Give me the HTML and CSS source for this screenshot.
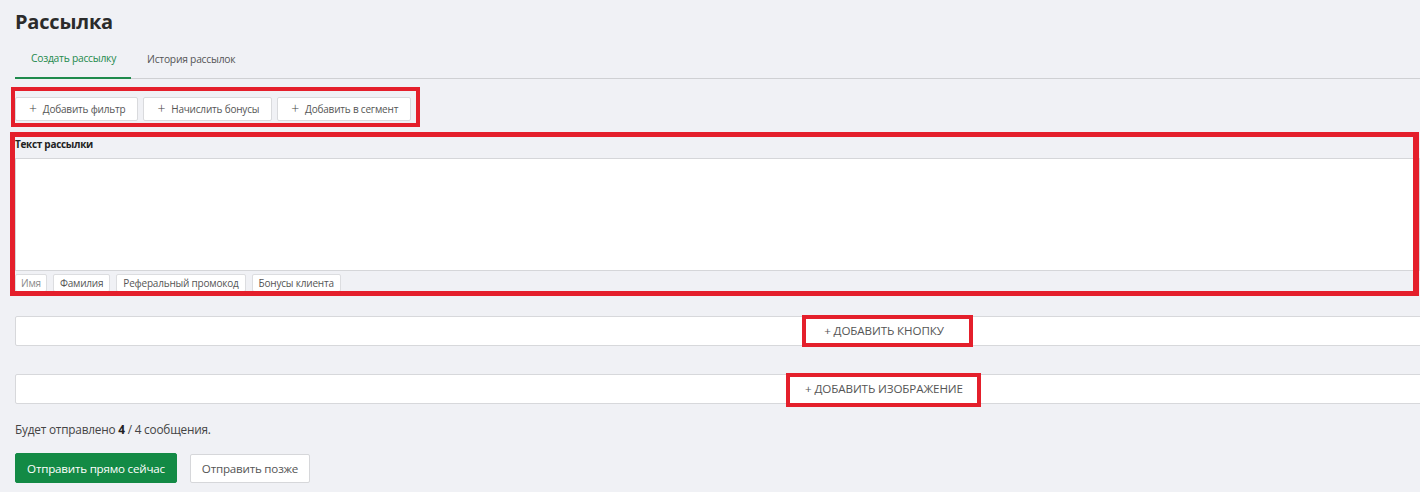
FILE: index.html
```html
<!DOCTYPE html>
<html lang="ru">
<head>
<meta charset="utf-8">
<title>Рассылка</title>
<link rel="stylesheet" href="styles.css">
</head>
<body>
<div class="page">
  <h1 class="title">Рассылка</h1>

  <nav class="tabs">
    <a class="tab tab-active">Создать рассылку</a>
    <a class="tab">История рассылок</a>
  </nav>

  <div class="toolbar">
    <button class="tool-btn"><span class="plus">+</span>Добавить фильтр</button>
    <button class="tool-btn"><span class="plus">+</span>Начислить бонусы</button>
    <button class="tool-btn"><span class="plus">+</span>Добавить в сегмент</button>
  </div>

  <section class="message">
    <div class="message-label">Текст рассылки</div>
    <textarea class="message-input"></textarea>
    <div class="chips">
      <span class="chip chip-muted">Имя</span>
      <span class="chip">Фамилия</span>
      <span class="chip">Реферальный промокод</span>
      <span class="chip">Бонусы клиента</span>
    </div>
  </section>

  <div class="add-bar">+ ДОБАВИТЬ КНОПКУ</div>
  <div class="add-bar">+ ДОБАВИТЬ ИЗОБРАЖЕНИЕ</div>

  <p class="summary">Будет отправлено <b>4</b> / 4 сообщения.</p>

  <div class="actions">
    <button class="btn btn-primary">Отправить прямо сейчас</button>
    <button class="btn btn-default">Отправить позже</button>
  </div>

  <!-- highlight frames drawn on top of the form -->
  <div class="mark mark-toolbar"></div>
  <div class="mark mark-message"></div>
  <div class="mark mark-button"></div>
  <div class="mark mark-image"></div>
</div>
</body>
</html>
```

FILE: styles.css
```css
html, body {
  margin: 0;
  padding: 0;
  background: #f0f1f5;
  overflow: hidden;
}

body {
  font-family: "Open Sans", "Noto Sans", "DejaVu Sans", sans-serif;
  color: #333;
}

.page {
  position: relative;
  padding: 0 0 0 15px;
  height: 492px;
}

.title {
  margin: 0;
  padding-top: 8px;
  height: 32px;
  font-size: 20px;
  font-weight: 700;
  line-height: 28px;
  color: #2b2b2b;
  letter-spacing: -0.2px;
}

.tabs {
  display: flex;
  border-bottom: 1px solid #cfd0d3;
  height: 38px;
}

.tab {
  display: block;
  padding: 0 15px 0 16px;
  font-size: 10.3px;
  line-height: 38px;
  color: #555;
  letter-spacing: -0.25px;
}

.tab-active {
  color: #1f8a4c;
  border-bottom: 2px solid #1f8a4c;
  margin-bottom: -1px;
  line-height: 36px;
}

.toolbar {
  display: flex;
  gap: 5px;
  margin-top: 18px;
}

.tool-btn {
  height: 24px;
  padding: 0 12px 0 13px;
  background: #fff;
  border: 1px solid #d9dadd;
  border-radius: 2px;
  font-family: inherit;
  font-size: 10px;
  color: #555;
  letter-spacing: -0.2px;
  display: flex;
  align-items: center;
}

.plus {
  font-size: 14px;
  font-weight: 300;
  margin-right: 6px;
  color: #444;
  line-height: 1;
}

.message {
  margin-top: 15px;
}

.message-label {
  font-size: 10px;
  font-weight: 700;
  color: #222;
  line-height: 16px;
  letter-spacing: -0.3px;
}

.message-input {
  display: block;
  box-sizing: border-box;
  width: 1405px;
  height: 113px;
  margin: 6px 0 0;
  border: 1px solid #d5d6d9;
  background: #fff;
  resize: none;
  outline: none;
}

.chips {
  display: flex;
  gap: 6px;
  margin-top: 3px;
}

.chip {
  height: 18px;
  box-sizing: border-box;
  padding: 0 6px;
  background: #fff;
  border: 1px solid #dcdde0;
  border-radius: 2px;
  font-size: 10px;
  line-height: 16px;
  color: #555;
  letter-spacing: -0.2px;
}

.chip-muted {
  color: #8a8a8a;
  padding: 0 5px;
}

.add-bar {
  box-sizing: border-box;
  width: 1738px;
  height: 30px;
  margin-top: 24px;
  background: #fff;
  border: 1px solid #d7d8db;
  border-radius: 2px;
  font-size: 11.6px;
  line-height: 28px;
  text-align: center;
  color: #555;
  letter-spacing: -0.1px;
}

.add-bar + .add-bar {
  margin-top: 28px;
}

.summary {
  margin: 17px 0 0;
  font-size: 11.8px;
  line-height: 16px;
  color: #444;
  letter-spacing: -0.2px;
}

.summary b {
  font-weight: 700;
  color: #222;
}

.actions {
  display: flex;
  gap: 13px;
  margin-top: 16px;
}

.btn {
  height: 30px;
  padding: 0 8px;
  border-radius: 2px;
  font-family: inherit;
  font-size: 11.6px;
  letter-spacing: -0.2px;
}

.btn-primary {
  width: 162px;
  background: #138a45;
  border: 1px solid #138a45;
  color: #fff;
}

.btn-default {
  width: 120px;
  margin-top: 1px;
  height: 29px;
  background: #fff;
  border: 1px solid #d6d7da;
  color: #555;
}

/* red highlight frames */
.mark {
  position: absolute;
  box-sizing: border-box;
  border: 4px solid #e41f2b;
  pointer-events: none;
}

.mark-toolbar {
  left: 11px;
  top: 87px;
  width: 409px;
  height: 40px;
}

.mark-message {
  left: 10px;
  top: 132px;
  width: 1409px;
  height: 164px;
  border-width: 5px 6px 5px 5px;
}

.mark-button {
  left: 802px;
  top: 315px;
  width: 171px;
  height: 32px;
}

.mark-image {
  left: 786px;
  top: 373px;
  width: 195px;
  height: 34px;
}
```
